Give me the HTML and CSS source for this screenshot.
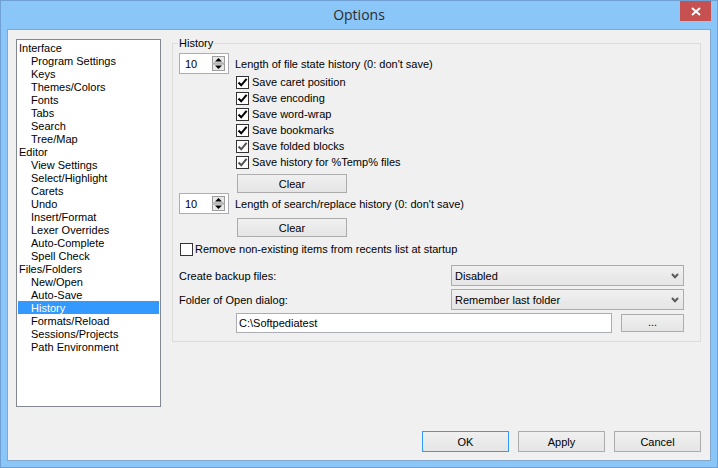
FILE: index.html
```html
<!DOCTYPE html>
<html>
<head>
<meta charset="utf-8">
<title>Options</title>
<link rel="stylesheet" href="styles.css">
</head>
<body>
<div class="window">
  <div class="titlebar">
    <div class="title">Options</div>
    <div class="close">
      <svg width="10" height="9" viewBox="0 0 10 9"><path d="M1 1 L9 8 M9 1 L1 8" stroke="#fff" stroke-width="2" fill="none"/></svg>
    </div>
  </div>
  <div class="client">
    <div class="main">
      <ul class="tree">
        <li class="l0">Interface</li>
        <li class="l1">Program Settings</li>
        <li class="l1">Keys</li>
        <li class="l1">Themes/Colors</li>
        <li class="l1">Fonts</li>
        <li class="l1">Tabs</li>
        <li class="l1">Search</li>
        <li class="l1">Tree/Map</li>
        <li class="l0">Editor</li>
        <li class="l1">View Settings</li>
        <li class="l1">Select/Highlight</li>
        <li class="l1">Carets</li>
        <li class="l1">Undo</li>
        <li class="l1">Insert/Format</li>
        <li class="l1">Lexer Overrides</li>
        <li class="l1">Auto-Complete</li>
        <li class="l1">Spell Check</li>
        <li class="l0">Files/Folders</li>
        <li class="l1">New/Open</li>
        <li class="l1">Auto-Save</li>
        <li class="l1 selected">History</li>
        <li class="l1">Formats/Reload</li>
        <li class="l1">Sessions/Projects</li>
        <li class="l1">Path Environment</li>
      </ul>
      <fieldset class="group">
        <legend>History</legend>
        <div class="spin-row">
          <div class="spin">
            <span>10</span>
            <svg class="spin-btns" width="13" height="15" viewBox="0 0 13 15">
              <rect x="0.5" y="0.5" width="12" height="6.5" fill="#e8e8e8" stroke="#9c9c9c"/>
              <rect x="0.5" y="8" width="12" height="6.5" fill="#e8e8e8" stroke="#9c9c9c"/>
              <path d="M3 5.5 L6.5 2 L10 5.5 Z" fill="#000"/>
              <path d="M3 9.5 L6.5 13 L10 9.5 Z" fill="#000"/>
            </svg>
          </div>
          <span>Length of file state history (0: don't save)</span>
        </div>
        <div class="checks">
          <div class="check"><span class="box"><svg width="11" height="11" viewBox="0 0 11 11"><path d="M1.5 5.5 L4.2 8.3 L9.6 1.8" stroke="#000" stroke-width="2.1" fill="none"/></svg></span>Save caret position</div>
          <div class="check"><span class="box"><svg width="11" height="11" viewBox="0 0 11 11"><path d="M1.5 5.5 L4.2 8.3 L9.6 1.8" stroke="#000" stroke-width="2.1" fill="none"/></svg></span>Save encoding</div>
          <div class="check"><span class="box"><svg width="11" height="11" viewBox="0 0 11 11"><path d="M1.5 5.5 L4.2 8.3 L9.6 1.8" stroke="#000" stroke-width="2.1" fill="none"/></svg></span>Save word-wrap</div>
          <div class="check"><span class="box"><svg width="11" height="11" viewBox="0 0 11 11"><path d="M1.5 5.5 L4.2 8.3 L9.6 1.8" stroke="#000" stroke-width="2.1" fill="none"/></svg></span>Save bookmarks</div>
          <div class="check"><span class="box"><svg width="11" height="11" viewBox="0 0 11 11"><path d="M1.5 5.5 L4.2 8.3 L9.6 1.8" stroke="#555" stroke-width="2.1" fill="none"/></svg></span>Save folded blocks</div>
          <div class="check"><span class="box"><svg width="11" height="11" viewBox="0 0 11 11"><path d="M1.5 5.5 L4.2 8.3 L9.6 1.8" stroke="#555" stroke-width="2.1" fill="none"/></svg></span>Save history for %Temp% files</div>
        </div>
        <div class="btn clear">Clear</div>
        <div class="spin-row">
          <div class="spin">
            <span>10</span>
            <svg class="spin-btns" width="13" height="15" viewBox="0 0 13 15">
              <rect x="0.5" y="0.5" width="12" height="6.5" fill="#e8e8e8" stroke="#9c9c9c"/>
              <rect x="0.5" y="8" width="12" height="6.5" fill="#e8e8e8" stroke="#9c9c9c"/>
              <path d="M3 5.5 L6.5 2 L10 5.5 Z" fill="#000"/>
              <path d="M3 9.5 L6.5 13 L10 9.5 Z" fill="#000"/>
            </svg>
          </div>
          <span>Length of search/replace history (0: don't save)</span>
        </div>
        <div class="btn clear">Clear</div>
        <div class="check remove"><span class="box"></span>Remove non-existing items from recents list at startup</div>
        <div class="form-row first">
          <span>Create backup files:</span>
          <div class="select"><span>Disabled</span><svg width="8" height="6" viewBox="0 0 8 6"><path d="M1 1 L4 4.2 L7 1" stroke="#5a5a5a" stroke-width="2" fill="none"/></svg></div>
        </div>
        <div class="form-row">
          <span>Folder of Open dialog:</span>
          <div class="select"><span>Remember last folder</span><svg width="8" height="6" viewBox="0 0 8 6"><path d="M1 1 L4 4.2 L7 1" stroke="#5a5a5a" stroke-width="2" fill="none"/></svg></div>
        </div>
        <div class="path-row">
          <div class="textbox">C:\Softpediatest</div>
          <div class="btn browse">...</div>
        </div>
      </fieldset>
    </div>
    <div class="footer">
      <div class="btn action default">OK</div>
      <div class="btn action">Apply</div>
      <div class="btn action">Cancel</div>
    </div>
  </div>
</div>
</body>
</html>
```

FILE: styles.css
```css
* { box-sizing: border-box; }
html, body { margin: 0; padding: 0; }
body {
  width: 718px;
  height: 468px;
  overflow: hidden;
  font-family: "Liberation Sans", Arial, sans-serif;
  font-size: 11px;
  color: #000;
}
.window {
  width: 718px;
  height: 468px;
  background: #8ac6f8;
  border: 1px solid #6f9fd3;
  display: flex;
  flex-direction: column;
}
.titlebar {
  height: 28px;
  display: grid;
  grid-template-columns: 1fr auto 1fr;
  align-items: center;
}
.title {
  grid-column: 2;
  font-family: "Open Sans", "Noto Sans", sans-serif;
  font-size: 14px;
  line-height: 20px;
  color: #2b2b2b;
}
.close {
  grid-column: 3;
  justify-self: end;
  align-self: start;
  width: 31px;
  height: 20px;
  margin-right: 6px;
  background: #c75050;
  display: flex;
  align-items: center;
  justify-content: center;
}
.client {
  flex: 1;
  margin: 0 6px 6px 6px;
  background: #f0f0f0;
  border: 1px solid #83a8cc;
  padding: 7px 9px 8px 8px;
  display: flex;
  flex-direction: column;
  justify-content: space-between;
}
.main {
  display: flex;
  align-items: flex-start;
  gap: 11px;
}
.tree {
  list-style: none;
  margin: 2px 0 0 0;
  padding: 1px 1px 0 1px;
  width: 145px;
  height: 368px;
  background: #fff;
  border: 1px solid #828790;
}
.tree li {
  height: 13px;
  line-height: 14px;
  white-space: nowrap;
}
.tree .l0 { padding-left: 1px; }
.tree .l1 { padding-left: 13px; }
.tree .selected { background: #3399ff; color: #fff; }

.group {
  flex: 1;
  min-width: 0;
  margin: 0;
  border: 1px solid #dcdcdc;
  padding: 4px 16px 8px 6px;
}
.group legend {
  padding: 0 1px;
  margin-left: -1px;
  font-size: 11px;
  line-height: 12px;
}
.spin-row {
  display: flex;
  align-items: center;
  gap: 6px;
  height: 21px;
}
.spin {
  width: 50px;
  height: 21px;
  background: #fff;
  border: 1px solid #abadb3;
  display: flex;
  align-items: center;
  justify-content: space-between;
  padding: 0 3px 0 5px;
}
.spin-btns { display: block; }
.checks {
  margin-left: 57px;
  display: flex;
  flex-direction: column;
}
.check {
  display: flex;
  align-items: center;
  gap: 3px;
  height: 16px;
  white-space: nowrap;
}
.box {
  width: 13px;
  height: 13px;
  border: 1px solid #333;
  background: #fff;
  display: flex;
  align-items: center;
  justify-content: center;
  flex: none;
}
.box svg { display: block; }
.btn {
  background: linear-gradient(#f0f0f0, #e5e5e5);
  border: 1px solid #acacac;
  display: flex;
  align-items: center;
  justify-content: center;
}
.clear {
  margin: 4px 0 0 58px;
  width: 110px;
  height: 19px;
}
.check.remove {
  margin: 5px 0 0 1px;
  height: 14px;
  gap: 2px;
}
.form-row {
  display: flex;
  justify-content: space-between;
  align-items: center;
  height: 21px;
  margin-top: 3px;
}
.form-row.first { margin-top: 9px; }
.select {
  width: 233px;
  height: 21px;
  background: linear-gradient(#f0f0f0, #e5e5e5);
  border: 1px solid #acacac;
  display: flex;
  align-items: center;
  justify-content: space-between;
  padding: 0 4px 0 3px;
}
.select svg { display: block; }
.path-row {
  display: flex;
  align-items: center;
  height: 20px;
  margin: 3px 0 0 57px;
}
.textbox {
  width: 376px;
  height: 20px;
  background: #fff;
  border: 1px solid #abadb3;
  padding-left: 2px;
  line-height: 18px;
}
.browse {
  margin-left: auto;
  width: 63px;
  height: 18px;
  padding-bottom: 2px;
}
.footer {
  display: flex;
  justify-content: flex-end;
  gap: 9px;
}
.action {
  width: 87px;
  height: 21px;
}
.action.default { border-color: #3399ff; }
```
